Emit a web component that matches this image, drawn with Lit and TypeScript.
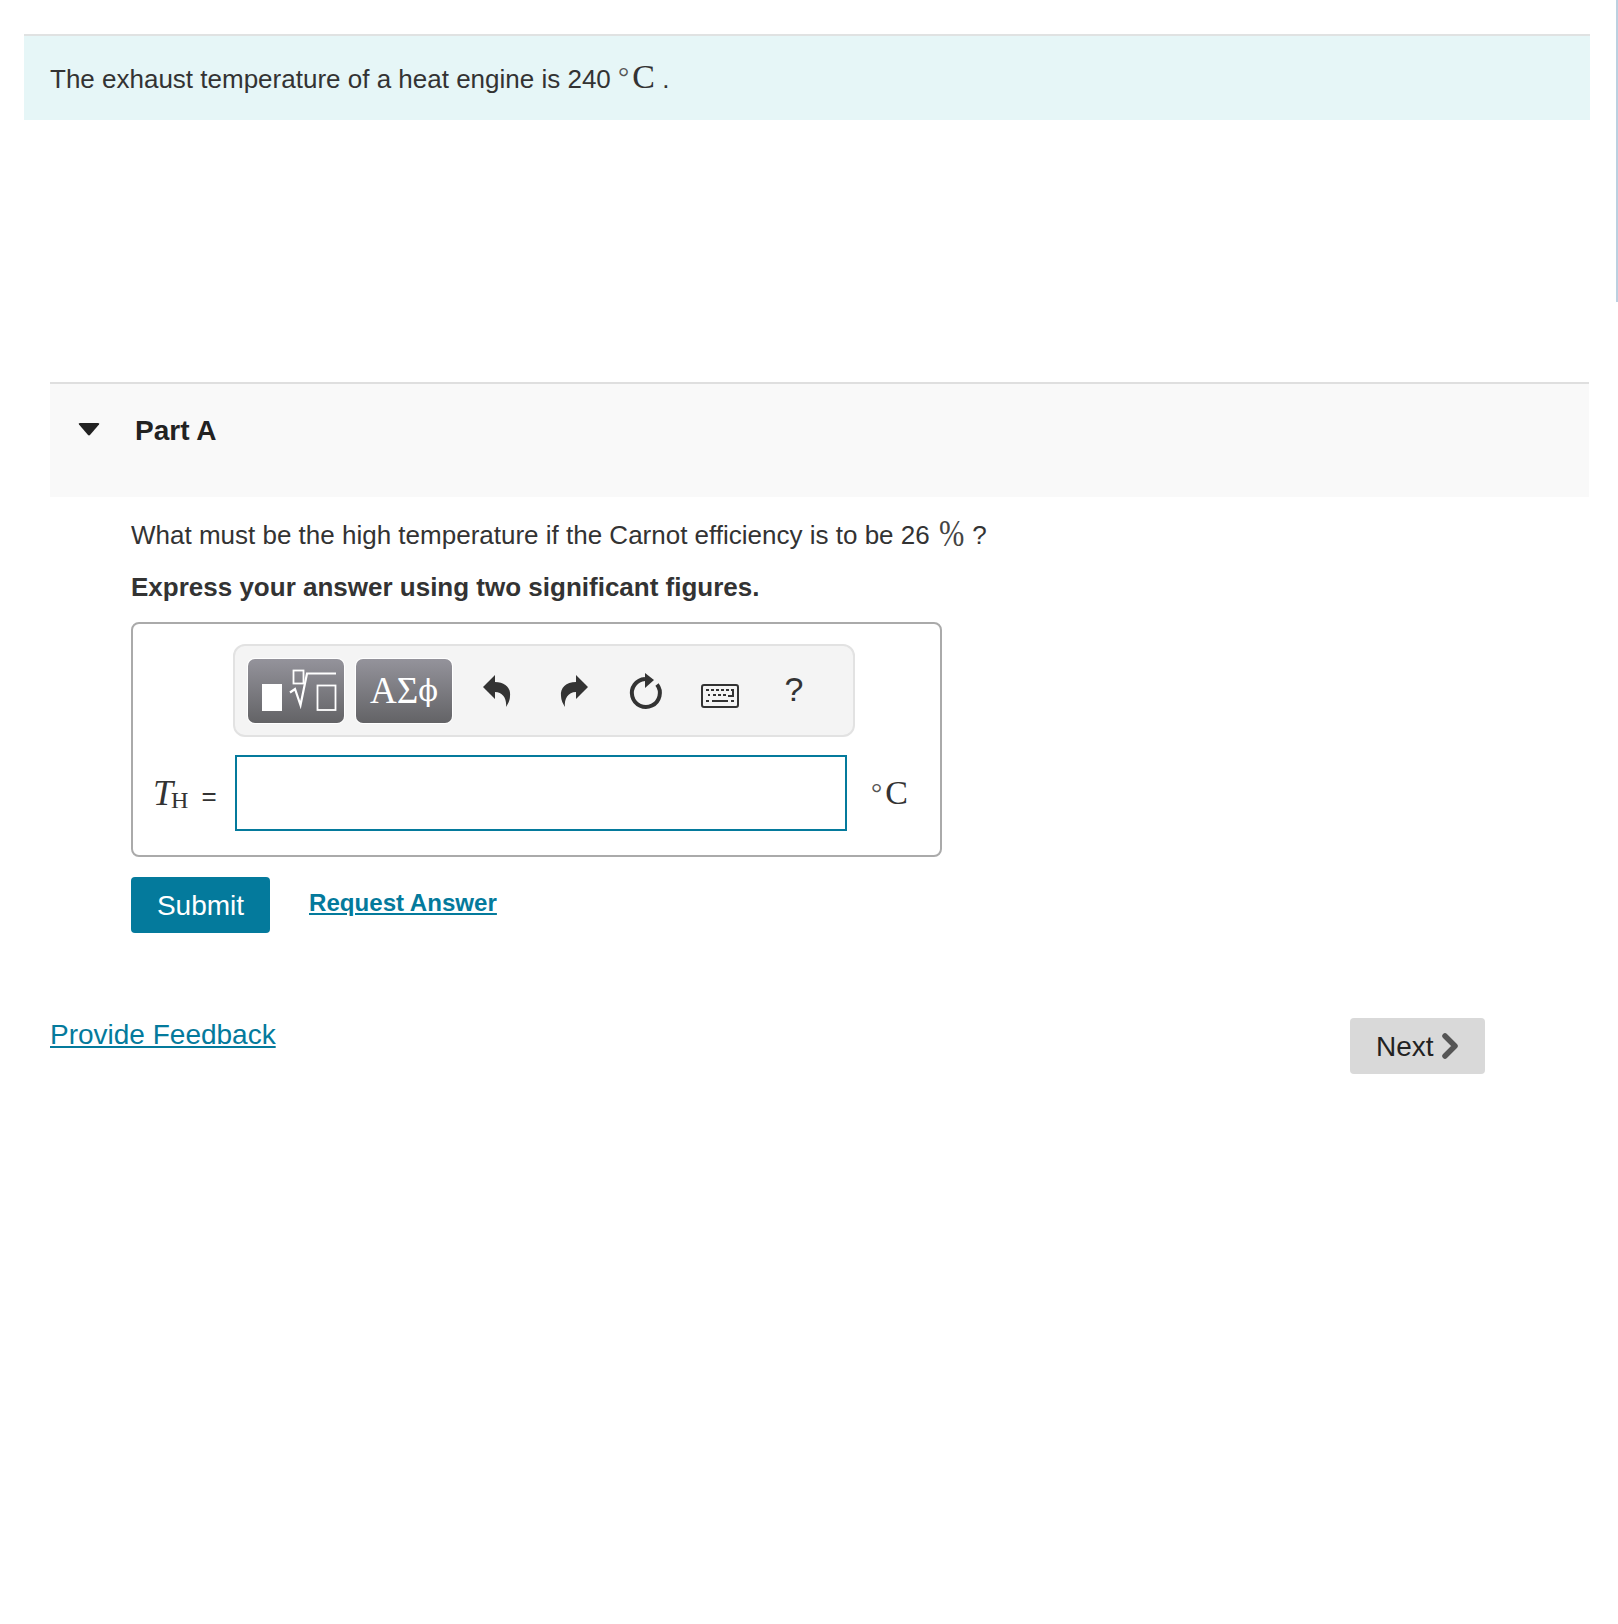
import { LitElement, html, css } from "lit";
import { customElement } from "lit/decorators.js";

@customElement("app-root")
export class AppRoot extends LitElement {
  static styles = css`
    :host { display: block; position: relative; width: 1618px; height: 1624px; background: #fff; overflow: hidden;
      font-family: "Liberation Sans", Arial, sans-serif; color: #333; font-size: 26px; }
    * { box-sizing: border-box; }
    .scrollbar { position: absolute; top: 0; right: 0; width: 2px; height: 302px; background: #bcd0e0; }
    .page { display: flex; flex-direction: column; padding-top: 34px; }
    .intro { margin: 0 28px 0 24px; height: 86px; background: #e6f6f7; border-top: 2px solid #e0e2e2; padding: 26px 0 0 26px; line-height: 30px; }
    .math { font-family: "Liberation Serif", "DejaVu Serif", serif; }
    .big { font-size: 34px; }
    .deg { font-size: 28px; font-weight: 400; position: relative; top: -2px; margin-right: 3px; color: #555; }
    .part { margin: 262px 29px 0 50px; height: 115px; background: #f9f9f9; border-top: 2px solid #dfdfdf; display: flex; align-items: flex-start; padding: 32px 0 0 28px; }
    .part svg { width: 22px; height: 13px; margin-top: 7px; flex: none; }
    .part h2 { margin: 0 0 0 35px; font-size: 28px; line-height: 30px; font-weight: 700; color: #222; }
    .body { margin-left: 131px; width: 811px; }
    .q { margin: 19px 0 0; line-height: 30px; height: 44px; white-space: nowrap; }
    .pct { display: inline-block; width: 25px; height: 30px; line-height: 30px; vertical-align: baseline; font-size: 38px; margin: 0 1px 0 2px; }
    .pct span { display: block; transform: scaleX(0.8); transform-origin: left center; position: relative; top: 2px; color: #444; }
    .ex { margin: 12px 0 0; font-weight: 700; line-height: 30px; height: 30px; }
    .box { margin-top: 20px; height: 235px; border: 2px solid #aaa; border-radius: 8px; display: flex; flex-direction: column; padding: 20px 0 0 100px; position: relative; }
    .toolbar { width: 622px; height: 93px; background: #f4f4f4; border: 2px solid #e2e2e2; border-radius: 12px; display: flex; align-items: center; padding: 0 0 0 13px; }
    .tb { width: 96px; height: 64px; border-radius: 7px; background: linear-gradient(#94939b, #636366); box-shadow: 0 0 0 1px #fff; margin-right: 12px; color: #fff; display: flex; align-items: center; justify-content: center; flex: none; }
    .tb svg { width: 96px; height: 64px; display: block; }
    .tb.sym { font-family: "Liberation Serif", serif; font-size: 37px; }
    .tb.sym span { font-family: "DejaVu Serif", serif; font-size: 29px; }
    .ic { flex: none; display: block; fill: #333; }
    .kb { margin: 10px 0 0 37px; }
    .q-ic { font-size: 34px; line-height: 40px; width: 30px; text-align: center; margin-left: 40px; margin-top: -3px; }
    .row { display: flex; align-items: center; margin-top: 18px; height: 76px; margin-left: -100px; }
    .label { width: 102px; padding-left: 20px; display: flex; align-items: baseline; white-space: nowrap; }
    .label i { font-family: "Liberation Serif", serif; font-size: 36px; }
    .label sub { font-family: "Liberation Serif", serif; font-size: 24px; vertical-align: baseline; position: relative; top: 3px; margin-left: -2px; }
    .label span { margin-left: 13px; font-size: 26px; }
    .input { width: 612px; height: 76px; border: 2px solid #047a9c; background: #fff; }
    .unit { margin-left: 24px; }
    .actions { display: flex; align-items: flex-start; margin-top: 20px; }
    .submit { width: 139px; height: 56px; background: #047a9c; color: #fff; border-radius: 4px; display: flex; align-items: center; justify-content: center; font-size: 28px; padding-top: 2px; }
    .req { margin: 11px 0 0 39px; font-weight: 700; font-size: 24.1px; line-height: 30px; color: #047a9c; text-decoration: underline; }
    .foot { display: flex; justify-content: space-between; align-items: flex-start; margin: 85px 133px 0 50px; }
    .fb { font-size: 28px; line-height: 34px; color: #047a9c; text-decoration: underline; }
    .next { width: 135px; height: 56px; background: #d9d9d9; border-radius: 4px; display: flex; align-items: center; padding: 2px 0 0 26px; font-size: 28px; color: #222; }
    .next svg { width: 18px; height: 26px; margin-left: 7px; margin-top: -2px; }
  `;

  render() {
    return html`
      <div class="scrollbar"></div>
      <div class="page">
        <div class="intro">The exhaust temperature of a heat engine is 240 <span class="math"><span class="deg">°</span><span class="big">C</span></span> .</div>
        <div class="part">
          <svg viewBox="0 0 22 13"><path d="M1 1.5 Q0 0 2 0 H20 Q22 0 21 1.5 L12.2 11.8 Q11 13 9.8 11.8 Z" fill="#222"/></svg>
          <h2>Part A</h2>
        </div>
        <div class="body">
          <p class="q">What must be the high temperature if the Carnot efficiency is to be 26 <span class="math pct"><span>%</span></span> ?</p>
          <p class="ex">Express your answer using two significant figures.</p>
          <div class="box">
            <div class="toolbar">
              <div class="tb">
                <svg viewBox="0 0 96 64">
                  <rect x="14" y="25" width="20" height="27" fill="#fff"/>
                  <rect x="45.5" y="11.5" width="10" height="13" fill="none" stroke="#fff" stroke-width="1.8"/>
                  <path d="M42 33.5 L47 30 L52.5 46 L59 14.5 H88" fill="none" stroke="#fff" stroke-width="2.2"/>
                  <rect x="69.5" y="26.5" width="18" height="24.5" fill="none" stroke="#fff" stroke-width="1.8"/>
                </svg>
              </div>
              <div class="tb sym">ΑΣ<span>ϕ</span></div>
              <svg class="ic" style="margin-left:19px" width="28" height="32" viewBox="0 0 28 32"><path d="M0 12 L12 0 V7 C22 7 28 13 27 21 C27 25 25 29 23 32 C24 24 20 17 12 17 V24 Z"/></svg>
              <svg class="ic" style="margin-left:49px" width="28" height="32" viewBox="0 0 28 32"><path d="M28 12 L16 0 V7 C6 7 0 13 1 21 C1 25 3 29 5 32 C4 24 8 17 16 17 V24 Z"/></svg>
              <svg class="ic" style="margin-left:40px" width="36" height="40" viewBox="0 0 36 40"><path d="M17 8 A14 14 0 1 0 29 13.5" fill="none" stroke="#333" stroke-width="4"/><path d="M17 2 L26 9 L17 17 Z"/></svg>
              <svg class="ic kb" width="38" height="24" viewBox="0 0 38 24">
                <rect x="1" y="1" width="36" height="22" rx="2" fill="none" stroke="#333" stroke-width="2"/>
                <path d="M5 5h3v2H5zM10 5h3v2h-3zM15 5h3v2h-3zM20 5h3v2h-3zM25 5h3v2h-3zM30 5h3v8h-6v-2h4V7h-1zM7 10h2v2H7zM12 10h3v2h-3zM17 10h3v2h-3zM22 10h3v2h-3zM5 16h3v2H5zM11 16h16v2H11zM30 16h3v2h-3z"/>
              </svg>
              <div class="q-ic">?</div>
            </div>
            <div class="row">
              <div class="label"><i>T</i><sub>H</sub><span>=</span></div>
              <div class="input"></div>
              <div class="unit math"><span class="deg">°</span><span class="big">C</span></div>
            </div>
          </div>
          <div class="actions">
            <div class="submit">Submit</div>
            <div class="req">Request Answer</div>
          </div>
        </div>
        <div class="foot">
          <div class="fb">Provide Feedback</div>
          <div class="next">Next<svg viewBox="0 0 18 26"><path d="M4 3 L14 13 L4 23" fill="none" stroke="#555" stroke-width="5.5" stroke-linecap="round" stroke-linejoin="round"/></svg></div>
        </div>
      </div>
    `;
  }
}
